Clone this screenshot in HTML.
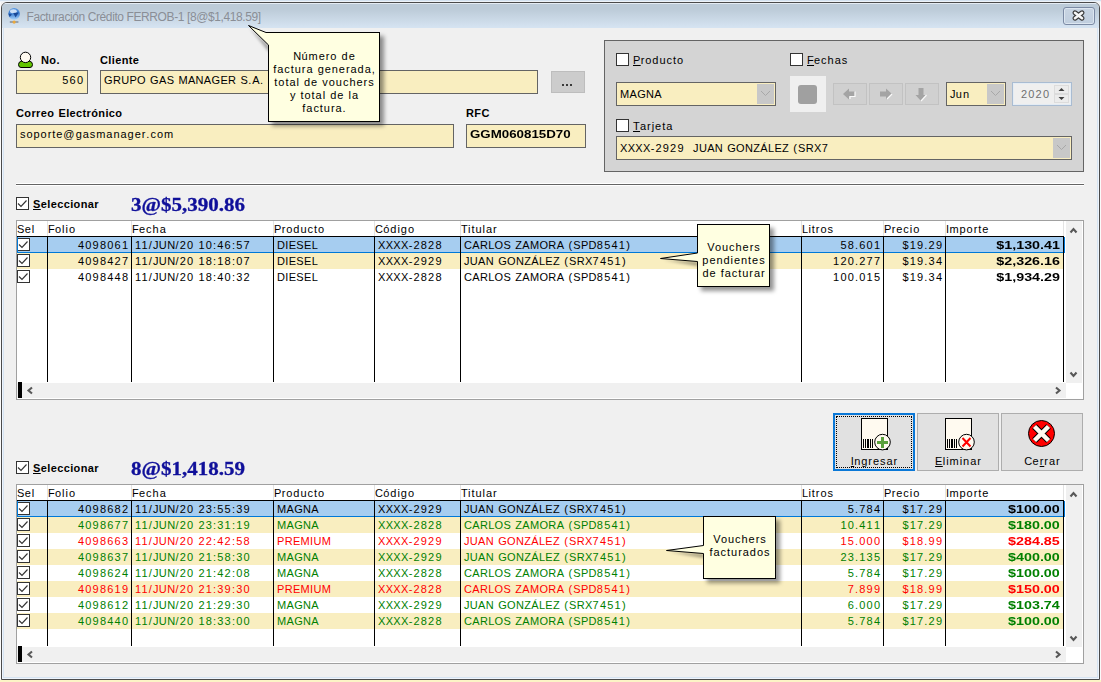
<!DOCTYPE html>
<html><head><meta charset="utf-8"><style>
html,body{margin:0;padding:0;}
body{width:1101px;height:682px;position:relative;overflow:hidden;background:#f0f0f0;font-family:"Liberation Sans", sans-serif;color:#000;}
.t{}
div{box-sizing:border-box;}
.u{text-decoration:underline;text-underline-offset:1px;}
</style></head><body>
<div style="position:absolute;left:0px;top:0px;width:1101px;height:1px;background:#d4e2f0"></div><div style="position:absolute;left:0px;top:1px;width:1101px;height:1px;background:#eef3f8"></div><div style="position:absolute;left:0px;top:2px;width:1px;height:680px;background:#fafafa"></div><div style="position:absolute;left:1100px;top:2px;width:1px;height:680px;background:#fafafa"></div><div style="position:absolute;left:0px;top:680px;width:1101px;height:2px;background:#fcf4c6"></div><div style="position:absolute;left:1px;top:2px;width:1099px;height:678px;border:1px solid #4a4a4a;border-radius:6px 6px 0 0;background:#eef4fc;"></div><div style="position:absolute;left:2px;top:3px;width:1097px;height:25px;border-radius:5px 5px 0 0;background:linear-gradient(#e4ecf4 0px,#e4ecf4 1px,#bccbd8 1px,#bccbd8 6px,#d6e4f2 25px);"></div><div style="position:absolute;left:3px;top:28px;width:1095px;height:650px;background:#d6e4f2"></div><div style="position:absolute;left:4px;top:28px;width:1093px;height:649px;background:#f0f0f0"></div><svg style="position:absolute;left:7px;top:7px" width="15" height="18" viewBox="0 0 15 18">
<defs><linearGradient id="gl" x1="0" y1="0" x2="0" y2="1"><stop offset="0" stop-color="#5a98e0"/><stop offset="0.45" stop-color="#3a7cd0"/><stop offset="1" stop-color="#a8d4fa"/></linearGradient></defs>
<circle cx="7.1" cy="6.9" r="5.8" fill="url(#gl)"/>
<ellipse cx="6.4" cy="4.2" rx="3.4" ry="2" fill="#eef6ff" opacity="0.8"/>
<path d="M1.4 6.4 L5 7.4 L2.6 10 Z" fill="#0f3d8c" opacity="0.85"/>
<path d="M6.2 6 L11.6 5.6 L8.6 10.4 Z" fill="#0f3d8c" opacity="0.85"/>
<rect x="2.8" y="14" width="8.6" height="2" fill="#8a929c" opacity="0.8"/>
<circle cx="7.1" cy="15.1" r="1.6" fill="#eca83a"/>
</svg><div class="t" style="position:absolute;left:26.5px;top:8.84px;line-height:16px;font-size:12px;white-space:nowrap;color:#8a8e96;letter-spacing:-0.4px;">Facturación Crédito FERROB-1 [8@$1,418.59]</div><div style="position:absolute;left:1063px;top:7px;width:32px;height:18px;border:1px solid #7b8aa4;border-radius:3px;background:linear-gradient(#c8d4e2,#c0cede);box-shadow:inset 0 0 0 1px #dce6f0;"></div><svg style="position:absolute;left:1071px;top:9px" width="15" height="13" viewBox="0 0 15 13">
<path d="M4 3.8 L11 9.2 M11 3.8 L4 9.2" stroke="#3a3a3a" stroke-width="5" stroke-linecap="round"/>
<path d="M4 3.8 L11 9.2 M11 3.8 L4 9.2" stroke="#f6f6f6" stroke-width="2.6" stroke-linecap="round"/>
</svg><svg style="position:absolute;left:17px;top:51px" width="17" height="18" viewBox="0 0 17 18">
<path d="M1.5 13.5 Q1.5 10.5 5 10 L12 10 Q15.5 10.5 15.5 13.5 Q15.5 16.5 13 16.5 L4 16.5 Q1.5 16.5 1.5 13.5 Z" fill="#62c400" stroke="#000" stroke-width="1"/>
<circle cx="8.5" cy="6.4" r="5.2" fill="#fffaf0" stroke="#000" stroke-width="1"/>
</svg><div class="t" style="position:absolute;left:41px;top:52.69px;line-height:15px;font-size:11px;white-space:nowrap;font-weight:bold;"><span style="letter-spacing:0.4px;">N</span><span style="letter-spacing:0.37px;">o</span>.</div><div class="t" style="position:absolute;left:100px;top:52.69px;line-height:15px;font-size:11px;white-space:nowrap;font-weight:bold;"><span style="letter-spacing:0.4px;">C</span><span style="letter-spacing:0.37px;">lient</span>e</div><div class="t" style="position:absolute;left:16px;top:105.69px;line-height:15px;font-size:11px;white-space:nowrap;font-weight:bold;"><span style="letter-spacing:0.4px;">C</span><span style="letter-spacing:0.37px;">orreo</span><span style="letter-spacing:1.0px;"> </span><span style="letter-spacing:0.4px;">E</span><span style="letter-spacing:0.37px;">lectrónic</span>o</div><div class="t" style="position:absolute;left:466px;top:105.69px;line-height:15px;font-size:11px;white-space:nowrap;font-weight:bold;"><span style="letter-spacing:0.4px;">RF</span>C</div><div style="position:absolute;left:16px;top:70px;width:72px;height:24px;background:#f9eec0;border:1px solid #646464;"></div><div class="t" style="position:absolute;right:1018px;top:72.69px;line-height:15px;font-size:11px;white-space:nowrap;"><span style="letter-spacing:1.2px;">56</span>0</div><div style="position:absolute;left:100px;top:70px;width:438px;height:24px;background:#f9eec0;border:1px solid #646464;"></div><div class="t" style="position:absolute;left:104px;top:72.69px;line-height:15px;font-size:11px;white-space:nowrap;"><span style="letter-spacing:0.32px;">GRUPO</span><span style="letter-spacing:1.1px;"> </span><span style="letter-spacing:0.32px;">GAS</span><span style="letter-spacing:1.1px;"> </span><span style="letter-spacing:0.32px;">MANAGER</span><span style="letter-spacing:1.1px;"> </span><span style="letter-spacing:0.32px;">S</span><span style="letter-spacing:1.15px;">.</span><span style="letter-spacing:0.32px;">A</span>.</div><div style="position:absolute;left:551px;top:71px;width:34px;height:22px;background:#cccccc;border:1px solid #bdbdbd;"></div><div style="position:absolute;left:562px;top:84px;width:2px;height:2px;background:#3a3a3a"></div><div style="position:absolute;left:566px;top:84px;width:2px;height:2px;background:#3a3a3a"></div><div style="position:absolute;left:570px;top:84px;width:2px;height:2px;background:#3a3a3a"></div><div style="position:absolute;left:16px;top:124px;width:438px;height:24px;background:#f9eec0;border:1px solid #646464;"></div><div class="t" style="position:absolute;left:20px;top:126.69px;line-height:15px;font-size:11px;white-space:nowrap;"><span style="letter-spacing:0.95px;">soporte</span><span style="letter-spacing:1.15px;">@</span><span style="letter-spacing:0.95px;">gasmanager</span><span style="letter-spacing:1.15px;">.</span><span style="letter-spacing:0.95px;">co</span>m</div><div style="position:absolute;left:466px;top:124px;width:120px;height:24px;background:#f9eec0;border:1px solid #646464;"></div><div class="t" style="position:absolute;left:470px;top:126.69px;line-height:15px;font-size:11px;white-space:nowrap;font-weight:bold;transform:scaleX(1.21);transform-origin:left center;">GGM060815D70</div><div style="position:absolute;left:604px;top:40px;width:480px;height:132px;background:#d4d4d4;border:1px solid #646464;"></div><div style="position:absolute;left:616px;top:53px;width:13px;height:13px;background:#fff;border:1px solid #333;"></div><div class="t" style="position:absolute;left:633px;top:52.69px;line-height:15px;font-size:11px;white-space:nowrap;"><span style="letter-spacing:0.32px;text-decoration:underline;">P</span><span style="letter-spacing:0.95px;">roduct</span>o</div><div style="position:absolute;left:790px;top:53px;width:13px;height:13px;background:#fff;border:1px solid #333;"></div><div class="t" style="position:absolute;left:807px;top:52.69px;line-height:15px;font-size:11px;white-space:nowrap;"><span style="letter-spacing:0.32px;text-decoration:underline;">F</span><span style="letter-spacing:0.95px;">echa</span>s</div><div style="position:absolute;left:616px;top:119px;width:13px;height:13px;background:#fff;border:1px solid #333;"></div><div class="t" style="position:absolute;left:633px;top:118.69px;line-height:15px;font-size:11px;white-space:nowrap;"><span style="letter-spacing:0.32px;text-decoration:underline;">T</span><span style="letter-spacing:0.95px;">arjet</span>a</div><div style="position:absolute;left:616px;top:82px;width:160px;height:24px;background:#f9eec0;border:1px solid #646464;"></div><div style="position:absolute;left:757px;top:84px;width:17px;height:20px;background:#c8c8c8;"></div><svg style="position:absolute;left:760px;top:90px" width="11" height="7" viewBox="0 0 11 7"><path d="M1 1 L5.5 5.5 L10 1" fill="none" stroke="#a8a8a8" stroke-width="1"/></svg><div class="t" style="position:absolute;left:620px;top:86.69px;line-height:15px;font-size:11px;white-space:nowrap;"><span style="letter-spacing:0.32px;">MAGN</span>A</div><div style="position:absolute;left:946px;top:82px;width:60px;height:24px;background:#f9eec0;border:1px solid #646464;"></div><div style="position:absolute;left:987px;top:84px;width:17px;height:20px;background:#c8c8c8;"></div><svg style="position:absolute;left:990px;top:90px" width="11" height="7" viewBox="0 0 11 7"><path d="M1 1 L5.5 5.5 L10 1" fill="none" stroke="#a8a8a8" stroke-width="1"/></svg><div class="t" style="position:absolute;left:950px;top:86.69px;line-height:15px;font-size:11px;white-space:nowrap;"><span style="letter-spacing:0.32px;">J</span><span style="letter-spacing:0.95px;">u</span>n</div><div style="position:absolute;left:616px;top:136px;width:456px;height:24px;background:#f9eec0;border:1px solid #646464;"></div><div style="position:absolute;left:1053px;top:138px;width:17px;height:20px;background:#c8c8c8;"></div><svg style="position:absolute;left:1056px;top:144px" width="11" height="7" viewBox="0 0 11 7"><path d="M1 1 L5.5 5.5 L10 1" fill="none" stroke="#a8a8a8" stroke-width="1"/></svg><div class="t" style="position:absolute;left:620px;top:140.69px;line-height:15px;font-size:11px;white-space:nowrap;"><span style="letter-spacing:0.32px;">XXXX</span><span style="letter-spacing:1.15px;">-</span><span style="letter-spacing:1.2px;">2929</span><span style="letter-spacing:1.1px;">&nbsp; </span><span style="letter-spacing:0.32px;">JUAN</span><span style="letter-spacing:1.1px;"> </span><span style="letter-spacing:0.32px;">GONZÁLEZ</span><span style="letter-spacing:1.1px;"> </span><span style="letter-spacing:1.15px;">(</span><span style="letter-spacing:0.32px;">SRX</span>7</div><div style="position:absolute;left:790px;top:76px;width:36px;height:36px;background:#efefef;"></div><div style="position:absolute;left:798px;top:85px;width:19px;height:19px;background:#a0a0a0;border-radius:3px;"></div><div style="position:absolute;left:833px;top:83px;width:34px;height:22px;background:#d0d0d0;border:1px solid #c2c2c2;"></div><div style="position:absolute;left:869px;top:83px;width:34px;height:22px;background:#d0d0d0;border:1px solid #c2c2c2;"></div><div style="position:absolute;left:905px;top:83px;width:34px;height:22px;background:#d0d0d0;border:1px solid #c2c2c2;"></div><svg style="position:absolute;left:842px;top:85.5px" width="16" height="16" viewBox="0 0 16 16">
<path d="M1 8 L7 2.5 L7 5.5 L13 5.5 L13 10.5 L7 10.5 L7 13.5 Z" fill="#a4a4a4"/>
<path d="M13 5.5 L13 10.5 L8 10.5 L8 13" fill="none" stroke="#fafafa" stroke-width="1.2"/>
</svg><svg style="position:absolute;left:877px;top:85.5px" width="16" height="16" viewBox="0 0 16 16">
<path d="M15 8 L9 2.5 L9 5.5 L3 5.5 L3 10.5 L9 10.5 L9 13.5 Z" fill="#a4a4a4"/>
<path d="M15 8 L10 13" fill="none" stroke="#fafafa" stroke-width="1.2"/>
</svg><svg style="position:absolute;left:913px;top:86px" width="16" height="16" viewBox="0 0 16 16">
<path d="M8 15 L2.5 9 L5.5 9 L5.5 2 L10.5 2 L10.5 9 L13.5 9 Z" fill="#a4a4a4"/>
<path d="M13.5 9 L8 15" fill="none" stroke="#fafafa" stroke-width="1.2"/>
</svg><div style="position:absolute;left:1012px;top:82px;width:60px;height:24px;background:#efefef;border:1px solid #a9bcd2;box-shadow:inset 0 0 0 1px #e4ecf4;"></div><div class="t" style="position:absolute;right:52px;top:86.69px;line-height:15px;font-size:11px;white-space:nowrap;color:#707070;"><span style="letter-spacing:1.2px;">202</span>0</div><div style="position:absolute;left:1054px;top:85px;width:15px;height:9px;background:#ececec;border:1px solid #dcdcdc;"></div><div style="position:absolute;left:1054px;top:94px;width:15px;height:9px;background:#ececec;border:1px solid #dcdcdc;"></div><svg style="position:absolute;left:1057px;top:86px" width="9" height="16" viewBox="0 0 9 16"><path d="M1.5 5 L4.5 2 L7.5 5 Z" fill="#404040"/><path d="M1.5 11 L7.5 11 L4.5 14 Z" fill="#404040"/></svg><div style="position:absolute;left:16px;top:183px;width:1068px;height:1px;background:#fff"></div><div style="position:absolute;left:16px;top:184px;width:1068px;height:1px;background:#646464"></div><div style="position:absolute;left:16px;top:185px;width:1068px;height:1px;background:#fff"></div><div style="position:absolute;left:16px;top:197px;width:13px;height:13px;background:#fff;border:1px solid #333;"></div><svg style="position:absolute;left:16px;top:197px" width="13" height="13" viewBox="0 0 13 13"><path d="M2 6.5 L5 9.5 L10.5 3.5" fill="none" stroke="#333" stroke-width="1.15"/></svg><div class="t" style="position:absolute;left:33px;top:196.69px;line-height:15px;font-size:11px;white-space:nowrap;font-weight:bold;"><span style="letter-spacing:0.4px;text-decoration:underline;">S</span><span style="letter-spacing:0.37px;">elecciona</span>r</div><div class="t" style="position:absolute;left:131px;top:193.76px;line-height:22px;font-size:18px;white-space:nowrap;font-family:'Liberation Serif',serif;font-weight:bold;color:#10109a;-webkit-text-stroke:0.3px #10109a;transform:scaleX(1.165);transform-origin:left center;">3@$5,390.86</div><div style="position:absolute;left:16px;top:220px;width:1068px;height:180px;background:#fff;border:1px solid #a0a0a0;"></div><div class="t" style="position:absolute;left:17px;top:221.69px;line-height:15px;font-size:11px;white-space:nowrap;"><span style="letter-spacing:0.32px;">S</span><span style="letter-spacing:0.95px;">e</span>l</div><div class="t" style="position:absolute;left:48px;top:221.69px;line-height:15px;font-size:11px;white-space:nowrap;"><span style="letter-spacing:0.32px;">F</span><span style="letter-spacing:0.95px;">oli</span>o</div><div class="t" style="position:absolute;left:132px;top:221.69px;line-height:15px;font-size:11px;white-space:nowrap;"><span style="letter-spacing:0.32px;">F</span><span style="letter-spacing:0.95px;">ech</span>a</div><div class="t" style="position:absolute;left:274px;top:221.69px;line-height:15px;font-size:11px;white-space:nowrap;"><span style="letter-spacing:0.32px;">P</span><span style="letter-spacing:0.95px;">roduct</span>o</div><div class="t" style="position:absolute;left:375px;top:221.69px;line-height:15px;font-size:11px;white-space:nowrap;"><span style="letter-spacing:0.32px;">C</span><span style="letter-spacing:0.95px;">ódig</span>o</div><div class="t" style="position:absolute;left:461px;top:221.69px;line-height:15px;font-size:11px;white-space:nowrap;"><span style="letter-spacing:0.32px;">T</span><span style="letter-spacing:0.95px;">itula</span>r</div><div class="t" style="position:absolute;left:802px;top:221.69px;line-height:15px;font-size:11px;white-space:nowrap;"><span style="letter-spacing:0.32px;">L</span><span style="letter-spacing:0.95px;">itro</span>s</div><div class="t" style="position:absolute;left:884px;top:221.69px;line-height:15px;font-size:11px;white-space:nowrap;"><span style="letter-spacing:0.32px;">P</span><span style="letter-spacing:0.95px;">reci</span>o</div><div class="t" style="position:absolute;left:946px;top:221.69px;line-height:15px;font-size:11px;white-space:nowrap;"><span style="letter-spacing:0.32px;">I</span><span style="letter-spacing:0.95px;">mport</span>e</div><div style="position:absolute;left:47px;top:221px;width:1px;height:15px;background:#e3e3e3"></div><div style="position:absolute;left:131px;top:221px;width:1px;height:15px;background:#e3e3e3"></div><div style="position:absolute;left:273px;top:221px;width:1px;height:15px;background:#e3e3e3"></div><div style="position:absolute;left:374px;top:221px;width:1px;height:15px;background:#e3e3e3"></div><div style="position:absolute;left:460px;top:221px;width:1px;height:15px;background:#e3e3e3"></div><div style="position:absolute;left:801px;top:221px;width:1px;height:15px;background:#e3e3e3"></div><div style="position:absolute;left:883px;top:221px;width:1px;height:15px;background:#e3e3e3"></div><div style="position:absolute;left:945px;top:221px;width:1px;height:15px;background:#e3e3e3"></div><div style="position:absolute;left:1063px;top:221px;width:1px;height:15px;background:#e3e3e3"></div><div style="position:absolute;left:17px;top:236px;width:1047px;height:1px;background:#000"></div><div style="position:absolute;left:17px;top:237px;width:1047px;height:16px;background:#a6cdf0"></div><div style="position:absolute;left:17px;top:238px;width:13px;height:13px;background:#fff;border:1px solid #333;"></div><svg style="position:absolute;left:17px;top:238px" width="13" height="13" viewBox="0 0 13 13"><path d="M2 6.5 L5 9.5 L10.5 3.5" fill="none" stroke="#333" stroke-width="1.15"/></svg><div class="t" style="position:absolute;right:973px;top:237.69px;line-height:15px;font-size:11px;white-space:nowrap;color:#000;"><span style="letter-spacing:1.2px;">409806</span>1</div><div class="t" style="position:absolute;left:135px;top:237.69px;line-height:15px;font-size:11px;white-space:nowrap;color:#000;"><span style="letter-spacing:1.2px;">11</span><span style="letter-spacing:1.15px;">/</span><span style="letter-spacing:0.32px;">JUN</span><span style="letter-spacing:1.15px;">/</span><span style="letter-spacing:1.2px;">20</span><span style="letter-spacing:1.1px;"> </span><span style="letter-spacing:1.2px;">10</span><span style="letter-spacing:1.15px;">:</span><span style="letter-spacing:1.2px;">46</span><span style="letter-spacing:1.15px;">:</span><span style="letter-spacing:1.2px;">5</span>7</div><div class="t" style="position:absolute;left:277px;top:237.69px;line-height:15px;font-size:11px;white-space:nowrap;color:#000;"><span style="letter-spacing:0.32px;">DIESE</span>L</div><div class="t" style="position:absolute;left:378px;top:237.69px;line-height:15px;font-size:11px;white-space:nowrap;color:#000;"><span style="letter-spacing:0.32px;">XXXX</span><span style="letter-spacing:1.15px;">-</span><span style="letter-spacing:1.2px;">282</span>8</div><div class="t" style="position:absolute;left:464px;top:237.69px;line-height:15px;font-size:11px;white-space:nowrap;color:#000;"><span style="letter-spacing:0.32px;">CARLOS</span><span style="letter-spacing:1.1px;"> </span><span style="letter-spacing:0.32px;">ZAMORA</span><span style="letter-spacing:1.1px;"> </span><span style="letter-spacing:1.15px;">(</span><span style="letter-spacing:0.32px;">SPD</span><span style="letter-spacing:1.2px;">8541</span>)</div><div class="t" style="position:absolute;right:221px;top:237.69px;line-height:15px;font-size:11px;white-space:nowrap;color:#000;"><span style="letter-spacing:1.2px;">58</span><span style="letter-spacing:1.15px;">.</span><span style="letter-spacing:1.2px;">60</span>1</div><div class="t" style="position:absolute;right:159px;top:237.69px;line-height:15px;font-size:11px;white-space:nowrap;color:#000;"><span style="letter-spacing:1.15px;">$</span><span style="letter-spacing:1.2px;">19</span><span style="letter-spacing:1.15px;">.</span><span style="letter-spacing:1.2px;">2</span>9</div><div class="t" style="position:absolute;right:41.5px;top:237.69px;line-height:15px;font-size:11px;white-space:nowrap;font-weight:bold;color:#000;transform:scaleX(1.3);transform-origin:right center;">$1,130.41</div><div style="position:absolute;left:17px;top:237px;width:1px;height:16px;background:#0078d7"></div><div style="position:absolute;left:17px;top:252px;width:1048px;height:1px;background:#0078d7"></div><div style="position:absolute;left:1064px;top:237px;width:1px;height:16px;background:#0078d7"></div><div style="position:absolute;left:17px;top:253px;width:1047px;height:16px;background:#f9eec0"></div><div style="position:absolute;left:17px;top:254px;width:13px;height:13px;background:#fff;border:1px solid #333;"></div><svg style="position:absolute;left:17px;top:254px" width="13" height="13" viewBox="0 0 13 13"><path d="M2 6.5 L5 9.5 L10.5 3.5" fill="none" stroke="#333" stroke-width="1.15"/></svg><div class="t" style="position:absolute;right:973px;top:253.69px;line-height:15px;font-size:11px;white-space:nowrap;color:#000;"><span style="letter-spacing:1.2px;">409842</span>7</div><div class="t" style="position:absolute;left:135px;top:253.69px;line-height:15px;font-size:11px;white-space:nowrap;color:#000;"><span style="letter-spacing:1.2px;">11</span><span style="letter-spacing:1.15px;">/</span><span style="letter-spacing:0.32px;">JUN</span><span style="letter-spacing:1.15px;">/</span><span style="letter-spacing:1.2px;">20</span><span style="letter-spacing:1.1px;"> </span><span style="letter-spacing:1.2px;">18</span><span style="letter-spacing:1.15px;">:</span><span style="letter-spacing:1.2px;">18</span><span style="letter-spacing:1.15px;">:</span><span style="letter-spacing:1.2px;">0</span>7</div><div class="t" style="position:absolute;left:277px;top:253.69px;line-height:15px;font-size:11px;white-space:nowrap;color:#000;"><span style="letter-spacing:0.32px;">DIESE</span>L</div><div class="t" style="position:absolute;left:378px;top:253.69px;line-height:15px;font-size:11px;white-space:nowrap;color:#000;"><span style="letter-spacing:0.32px;">XXXX</span><span style="letter-spacing:1.15px;">-</span><span style="letter-spacing:1.2px;">292</span>9</div><div class="t" style="position:absolute;left:464px;top:253.69px;line-height:15px;font-size:11px;white-space:nowrap;color:#000;"><span style="letter-spacing:0.32px;">JUAN</span><span style="letter-spacing:1.1px;"> </span><span style="letter-spacing:0.32px;">GONZÁLEZ</span><span style="letter-spacing:1.1px;"> </span><span style="letter-spacing:1.15px;">(</span><span style="letter-spacing:0.32px;">SRX</span><span style="letter-spacing:1.2px;">7451</span>)</div><div class="t" style="position:absolute;right:221px;top:253.69px;line-height:15px;font-size:11px;white-space:nowrap;color:#000;"><span style="letter-spacing:1.2px;">120</span><span style="letter-spacing:1.15px;">.</span><span style="letter-spacing:1.2px;">27</span>7</div><div class="t" style="position:absolute;right:159px;top:253.69px;line-height:15px;font-size:11px;white-space:nowrap;color:#000;"><span style="letter-spacing:1.15px;">$</span><span style="letter-spacing:1.2px;">19</span><span style="letter-spacing:1.15px;">.</span><span style="letter-spacing:1.2px;">3</span>4</div><div class="t" style="position:absolute;right:41.5px;top:253.69px;line-height:15px;font-size:11px;white-space:nowrap;font-weight:bold;color:#000;transform:scaleX(1.3);transform-origin:right center;">$2,326.16</div><div style="position:absolute;left:17px;top:269px;width:1047px;height:16px;background:#fff"></div><div style="position:absolute;left:17px;top:270px;width:13px;height:13px;background:#fff;border:1px solid #333;"></div><svg style="position:absolute;left:17px;top:270px" width="13" height="13" viewBox="0 0 13 13"><path d="M2 6.5 L5 9.5 L10.5 3.5" fill="none" stroke="#333" stroke-width="1.15"/></svg><div class="t" style="position:absolute;right:973px;top:269.69px;line-height:15px;font-size:11px;white-space:nowrap;color:#000;"><span style="letter-spacing:1.2px;">409844</span>8</div><div class="t" style="position:absolute;left:135px;top:269.69px;line-height:15px;font-size:11px;white-space:nowrap;color:#000;"><span style="letter-spacing:1.2px;">11</span><span style="letter-spacing:1.15px;">/</span><span style="letter-spacing:0.32px;">JUN</span><span style="letter-spacing:1.15px;">/</span><span style="letter-spacing:1.2px;">20</span><span style="letter-spacing:1.1px;"> </span><span style="letter-spacing:1.2px;">18</span><span style="letter-spacing:1.15px;">:</span><span style="letter-spacing:1.2px;">40</span><span style="letter-spacing:1.15px;">:</span><span style="letter-spacing:1.2px;">3</span>2</div><div class="t" style="position:absolute;left:277px;top:269.69px;line-height:15px;font-size:11px;white-space:nowrap;color:#000;"><span style="letter-spacing:0.32px;">DIESE</span>L</div><div class="t" style="position:absolute;left:378px;top:269.69px;line-height:15px;font-size:11px;white-space:nowrap;color:#000;"><span style="letter-spacing:0.32px;">XXXX</span><span style="letter-spacing:1.15px;">-</span><span style="letter-spacing:1.2px;">282</span>8</div><div class="t" style="position:absolute;left:464px;top:269.69px;line-height:15px;font-size:11px;white-space:nowrap;color:#000;"><span style="letter-spacing:0.32px;">CARLOS</span><span style="letter-spacing:1.1px;"> </span><span style="letter-spacing:0.32px;">ZAMORA</span><span style="letter-spacing:1.1px;"> </span><span style="letter-spacing:1.15px;">(</span><span style="letter-spacing:0.32px;">SPD</span><span style="letter-spacing:1.2px;">8541</span>)</div><div class="t" style="position:absolute;right:221px;top:269.69px;line-height:15px;font-size:11px;white-space:nowrap;color:#000;"><span style="letter-spacing:1.2px;">100</span><span style="letter-spacing:1.15px;">.</span><span style="letter-spacing:1.2px;">01</span>5</div><div class="t" style="position:absolute;right:159px;top:269.69px;line-height:15px;font-size:11px;white-space:nowrap;color:#000;"><span style="letter-spacing:1.15px;">$</span><span style="letter-spacing:1.2px;">19</span><span style="letter-spacing:1.15px;">.</span><span style="letter-spacing:1.2px;">3</span>4</div><div class="t" style="position:absolute;right:41.5px;top:269.69px;line-height:15px;font-size:11px;white-space:nowrap;font-weight:bold;color:#000;transform:scaleX(1.3);transform-origin:right center;">$1,934.29</div><div style="position:absolute;left:47px;top:236px;width:1px;height:146px;background:#000"></div><div style="position:absolute;left:131px;top:236px;width:1px;height:146px;background:#000"></div><div style="position:absolute;left:273px;top:236px;width:1px;height:146px;background:#000"></div><div style="position:absolute;left:374px;top:236px;width:1px;height:146px;background:#000"></div><div style="position:absolute;left:460px;top:236px;width:1px;height:146px;background:#000"></div><div style="position:absolute;left:801px;top:236px;width:1px;height:146px;background:#000"></div><div style="position:absolute;left:883px;top:236px;width:1px;height:146px;background:#000"></div><div style="position:absolute;left:945px;top:236px;width:1px;height:146px;background:#000"></div><div style="position:absolute;left:1063px;top:236px;width:1px;height:146px;background:#000"></div><div style="position:absolute;left:17px;top:383px;width:1049px;height:15px;background:#f0f0f0"></div><div style="position:absolute;left:18px;top:382px;width:4px;height:16px;background:#000"></div><svg style="position:absolute;left:25px;top:386px" width="10" height="9" viewBox="0 0 10 9"><path d="M7 1.5 L3.5 4.5 L7 7.5" fill="none" stroke="#585858" stroke-width="2.1"/></svg><svg style="position:absolute;left:1053px;top:386px" width="10" height="9" viewBox="0 0 10 9"><path d="M3 1.5 L6.5 4.5 L3 7.5" fill="none" stroke="#585858" stroke-width="2.1"/></svg><div style="position:absolute;left:1066px;top:221px;width:16px;height:162px;background:#f0f0f0"></div><svg style="position:absolute;left:1069px;top:226px" width="10" height="9" viewBox="0 0 10 9"><path d="M1.5 6.5 L4.5 3 L7.5 6.5" fill="none" stroke="#585858" stroke-width="2.1"/></svg><svg style="position:absolute;left:1069px;top:370px" width="10" height="9" viewBox="0 0 10 9"><path d="M1.5 2.5 L4.5 6 L7.5 2.5" fill="none" stroke="#585858" stroke-width="2.1"/></svg><div style="position:absolute;left:16px;top:461px;width:13px;height:13px;background:#fff;border:1px solid #333;"></div><svg style="position:absolute;left:16px;top:461px" width="13" height="13" viewBox="0 0 13 13"><path d="M2 6.5 L5 9.5 L10.5 3.5" fill="none" stroke="#333" stroke-width="1.15"/></svg><div class="t" style="position:absolute;left:33px;top:460.69px;line-height:15px;font-size:11px;white-space:nowrap;font-weight:bold;"><span style="letter-spacing:0.4px;text-decoration:underline;">S</span><span style="letter-spacing:0.37px;">elecciona</span>r</div><div class="t" style="position:absolute;left:131px;top:457.76px;line-height:22px;font-size:18px;white-space:nowrap;font-family:'Liberation Serif',serif;font-weight:bold;color:#10109a;-webkit-text-stroke:0.3px #10109a;transform:scaleX(1.165);transform-origin:left center;">8@$1,418.59</div><div style="position:absolute;left:16px;top:484px;width:1068px;height:180px;background:#fff;border:1px solid #a0a0a0;"></div><div class="t" style="position:absolute;left:17px;top:485.69px;line-height:15px;font-size:11px;white-space:nowrap;"><span style="letter-spacing:0.32px;">S</span><span style="letter-spacing:0.95px;">e</span>l</div><div class="t" style="position:absolute;left:48px;top:485.69px;line-height:15px;font-size:11px;white-space:nowrap;"><span style="letter-spacing:0.32px;">F</span><span style="letter-spacing:0.95px;">oli</span>o</div><div class="t" style="position:absolute;left:132px;top:485.69px;line-height:15px;font-size:11px;white-space:nowrap;"><span style="letter-spacing:0.32px;">F</span><span style="letter-spacing:0.95px;">ech</span>a</div><div class="t" style="position:absolute;left:274px;top:485.69px;line-height:15px;font-size:11px;white-space:nowrap;"><span style="letter-spacing:0.32px;">P</span><span style="letter-spacing:0.95px;">roduct</span>o</div><div class="t" style="position:absolute;left:375px;top:485.69px;line-height:15px;font-size:11px;white-space:nowrap;"><span style="letter-spacing:0.32px;">C</span><span style="letter-spacing:0.95px;">ódig</span>o</div><div class="t" style="position:absolute;left:461px;top:485.69px;line-height:15px;font-size:11px;white-space:nowrap;"><span style="letter-spacing:0.32px;">T</span><span style="letter-spacing:0.95px;">itula</span>r</div><div class="t" style="position:absolute;left:802px;top:485.69px;line-height:15px;font-size:11px;white-space:nowrap;"><span style="letter-spacing:0.32px;">L</span><span style="letter-spacing:0.95px;">itro</span>s</div><div class="t" style="position:absolute;left:884px;top:485.69px;line-height:15px;font-size:11px;white-space:nowrap;"><span style="letter-spacing:0.32px;">P</span><span style="letter-spacing:0.95px;">reci</span>o</div><div class="t" style="position:absolute;left:946px;top:485.69px;line-height:15px;font-size:11px;white-space:nowrap;"><span style="letter-spacing:0.32px;">I</span><span style="letter-spacing:0.95px;">mport</span>e</div><div style="position:absolute;left:47px;top:485px;width:1px;height:15px;background:#e3e3e3"></div><div style="position:absolute;left:131px;top:485px;width:1px;height:15px;background:#e3e3e3"></div><div style="position:absolute;left:273px;top:485px;width:1px;height:15px;background:#e3e3e3"></div><div style="position:absolute;left:374px;top:485px;width:1px;height:15px;background:#e3e3e3"></div><div style="position:absolute;left:460px;top:485px;width:1px;height:15px;background:#e3e3e3"></div><div style="position:absolute;left:801px;top:485px;width:1px;height:15px;background:#e3e3e3"></div><div style="position:absolute;left:883px;top:485px;width:1px;height:15px;background:#e3e3e3"></div><div style="position:absolute;left:945px;top:485px;width:1px;height:15px;background:#e3e3e3"></div><div style="position:absolute;left:1063px;top:485px;width:1px;height:15px;background:#e3e3e3"></div><div style="position:absolute;left:17px;top:500px;width:1047px;height:1px;background:#000"></div><div style="position:absolute;left:17px;top:501px;width:1047px;height:16px;background:#a6cdf0"></div><div style="position:absolute;left:17px;top:502px;width:13px;height:13px;background:#fff;border:1px solid #333;"></div><svg style="position:absolute;left:17px;top:502px" width="13" height="13" viewBox="0 0 13 13"><path d="M2 6.5 L5 9.5 L10.5 3.5" fill="none" stroke="#333" stroke-width="1.15"/></svg><div class="t" style="position:absolute;right:973px;top:501.69px;line-height:15px;font-size:11px;white-space:nowrap;color:#000;"><span style="letter-spacing:1.2px;">409868</span>2</div><div class="t" style="position:absolute;left:135px;top:501.69px;line-height:15px;font-size:11px;white-space:nowrap;color:#000;"><span style="letter-spacing:1.2px;">11</span><span style="letter-spacing:1.15px;">/</span><span style="letter-spacing:0.32px;">JUN</span><span style="letter-spacing:1.15px;">/</span><span style="letter-spacing:1.2px;">20</span><span style="letter-spacing:1.1px;"> </span><span style="letter-spacing:1.2px;">23</span><span style="letter-spacing:1.15px;">:</span><span style="letter-spacing:1.2px;">55</span><span style="letter-spacing:1.15px;">:</span><span style="letter-spacing:1.2px;">3</span>9</div><div class="t" style="position:absolute;left:277px;top:501.69px;line-height:15px;font-size:11px;white-space:nowrap;color:#000;"><span style="letter-spacing:0.32px;">MAGN</span>A</div><div class="t" style="position:absolute;left:378px;top:501.69px;line-height:15px;font-size:11px;white-space:nowrap;color:#000;"><span style="letter-spacing:0.32px;">XXXX</span><span style="letter-spacing:1.15px;">-</span><span style="letter-spacing:1.2px;">292</span>9</div><div class="t" style="position:absolute;left:464px;top:501.69px;line-height:15px;font-size:11px;white-space:nowrap;color:#000;"><span style="letter-spacing:0.32px;">JUAN</span><span style="letter-spacing:1.1px;"> </span><span style="letter-spacing:0.32px;">GONZÁLEZ</span><span style="letter-spacing:1.1px;"> </span><span style="letter-spacing:1.15px;">(</span><span style="letter-spacing:0.32px;">SRX</span><span style="letter-spacing:1.2px;">7451</span>)</div><div class="t" style="position:absolute;right:221px;top:501.69px;line-height:15px;font-size:11px;white-space:nowrap;color:#000;"><span style="letter-spacing:1.2px;">5</span><span style="letter-spacing:1.15px;">.</span><span style="letter-spacing:1.2px;">78</span>4</div><div class="t" style="position:absolute;right:159px;top:501.69px;line-height:15px;font-size:11px;white-space:nowrap;color:#000;"><span style="letter-spacing:1.15px;">$</span><span style="letter-spacing:1.2px;">17</span><span style="letter-spacing:1.15px;">.</span><span style="letter-spacing:1.2px;">2</span>9</div><div class="t" style="position:absolute;right:41.5px;top:501.69px;line-height:15px;font-size:11px;white-space:nowrap;font-weight:bold;color:#000;transform:scaleX(1.3);transform-origin:right center;">$100.00</div><div style="position:absolute;left:17px;top:501px;width:1px;height:16px;background:#0078d7"></div><div style="position:absolute;left:17px;top:516px;width:1048px;height:1px;background:#0078d7"></div><div style="position:absolute;left:1064px;top:501px;width:1px;height:16px;background:#0078d7"></div><div style="position:absolute;left:17px;top:517px;width:1047px;height:16px;background:#f9eec0"></div><div style="position:absolute;left:17px;top:518px;width:13px;height:13px;background:#fff;border:1px solid #333;"></div><svg style="position:absolute;left:17px;top:518px" width="13" height="13" viewBox="0 0 13 13"><path d="M2 6.5 L5 9.5 L10.5 3.5" fill="none" stroke="#333" stroke-width="1.15"/></svg><div class="t" style="position:absolute;right:973px;top:517.69px;line-height:15px;font-size:11px;white-space:nowrap;color:#008000;"><span style="letter-spacing:1.2px;">409867</span>7</div><div class="t" style="position:absolute;left:135px;top:517.69px;line-height:15px;font-size:11px;white-space:nowrap;color:#008000;"><span style="letter-spacing:1.2px;">11</span><span style="letter-spacing:1.15px;">/</span><span style="letter-spacing:0.32px;">JUN</span><span style="letter-spacing:1.15px;">/</span><span style="letter-spacing:1.2px;">20</span><span style="letter-spacing:1.1px;"> </span><span style="letter-spacing:1.2px;">23</span><span style="letter-spacing:1.15px;">:</span><span style="letter-spacing:1.2px;">31</span><span style="letter-spacing:1.15px;">:</span><span style="letter-spacing:1.2px;">1</span>9</div><div class="t" style="position:absolute;left:277px;top:517.69px;line-height:15px;font-size:11px;white-space:nowrap;color:#008000;"><span style="letter-spacing:0.32px;">MAGN</span>A</div><div class="t" style="position:absolute;left:378px;top:517.69px;line-height:15px;font-size:11px;white-space:nowrap;color:#008000;"><span style="letter-spacing:0.32px;">XXXX</span><span style="letter-spacing:1.15px;">-</span><span style="letter-spacing:1.2px;">282</span>8</div><div class="t" style="position:absolute;left:464px;top:517.69px;line-height:15px;font-size:11px;white-space:nowrap;color:#008000;"><span style="letter-spacing:0.32px;">CARLOS</span><span style="letter-spacing:1.1px;"> </span><span style="letter-spacing:0.32px;">ZAMORA</span><span style="letter-spacing:1.1px;"> </span><span style="letter-spacing:1.15px;">(</span><span style="letter-spacing:0.32px;">SPD</span><span style="letter-spacing:1.2px;">8541</span>)</div><div class="t" style="position:absolute;right:221px;top:517.69px;line-height:15px;font-size:11px;white-space:nowrap;color:#008000;"><span style="letter-spacing:1.2px;">10</span><span style="letter-spacing:1.15px;">.</span><span style="letter-spacing:1.2px;">41</span>1</div><div class="t" style="position:absolute;right:159px;top:517.69px;line-height:15px;font-size:11px;white-space:nowrap;color:#008000;"><span style="letter-spacing:1.15px;">$</span><span style="letter-spacing:1.2px;">17</span><span style="letter-spacing:1.15px;">.</span><span style="letter-spacing:1.2px;">2</span>9</div><div class="t" style="position:absolute;right:41.5px;top:517.69px;line-height:15px;font-size:11px;white-space:nowrap;font-weight:bold;color:#008000;transform:scaleX(1.3);transform-origin:right center;">$180.00</div><div style="position:absolute;left:17px;top:533px;width:1047px;height:16px;background:#fff"></div><div style="position:absolute;left:17px;top:534px;width:13px;height:13px;background:#fff;border:1px solid #333;"></div><svg style="position:absolute;left:17px;top:534px" width="13" height="13" viewBox="0 0 13 13"><path d="M2 6.5 L5 9.5 L10.5 3.5" fill="none" stroke="#333" stroke-width="1.15"/></svg><div class="t" style="position:absolute;right:973px;top:533.69px;line-height:15px;font-size:11px;white-space:nowrap;color:#ff0000;"><span style="letter-spacing:1.2px;">409866</span>3</div><div class="t" style="position:absolute;left:135px;top:533.69px;line-height:15px;font-size:11px;white-space:nowrap;color:#ff0000;"><span style="letter-spacing:1.2px;">11</span><span style="letter-spacing:1.15px;">/</span><span style="letter-spacing:0.32px;">JUN</span><span style="letter-spacing:1.15px;">/</span><span style="letter-spacing:1.2px;">20</span><span style="letter-spacing:1.1px;"> </span><span style="letter-spacing:1.2px;">22</span><span style="letter-spacing:1.15px;">:</span><span style="letter-spacing:1.2px;">42</span><span style="letter-spacing:1.15px;">:</span><span style="letter-spacing:1.2px;">5</span>8</div><div class="t" style="position:absolute;left:277px;top:533.69px;line-height:15px;font-size:11px;white-space:nowrap;color:#ff0000;"><span style="letter-spacing:0.32px;">PREMIU</span>M</div><div class="t" style="position:absolute;left:378px;top:533.69px;line-height:15px;font-size:11px;white-space:nowrap;color:#ff0000;"><span style="letter-spacing:0.32px;">XXXX</span><span style="letter-spacing:1.15px;">-</span><span style="letter-spacing:1.2px;">292</span>9</div><div class="t" style="position:absolute;left:464px;top:533.69px;line-height:15px;font-size:11px;white-space:nowrap;color:#ff0000;"><span style="letter-spacing:0.32px;">JUAN</span><span style="letter-spacing:1.1px;"> </span><span style="letter-spacing:0.32px;">GONZÁLEZ</span><span style="letter-spacing:1.1px;"> </span><span style="letter-spacing:1.15px;">(</span><span style="letter-spacing:0.32px;">SRX</span><span style="letter-spacing:1.2px;">7451</span>)</div><div class="t" style="position:absolute;right:221px;top:533.69px;line-height:15px;font-size:11px;white-space:nowrap;color:#ff0000;"><span style="letter-spacing:1.2px;">15</span><span style="letter-spacing:1.15px;">.</span><span style="letter-spacing:1.2px;">00</span>0</div><div class="t" style="position:absolute;right:159px;top:533.69px;line-height:15px;font-size:11px;white-space:nowrap;color:#ff0000;"><span style="letter-spacing:1.15px;">$</span><span style="letter-spacing:1.2px;">18</span><span style="letter-spacing:1.15px;">.</span><span style="letter-spacing:1.2px;">9</span>9</div><div class="t" style="position:absolute;right:41.5px;top:533.69px;line-height:15px;font-size:11px;white-space:nowrap;font-weight:bold;color:#ff0000;transform:scaleX(1.3);transform-origin:right center;">$284.85</div><div style="position:absolute;left:17px;top:549px;width:1047px;height:16px;background:#f9eec0"></div><div style="position:absolute;left:17px;top:550px;width:13px;height:13px;background:#fff;border:1px solid #333;"></div><svg style="position:absolute;left:17px;top:550px" width="13" height="13" viewBox="0 0 13 13"><path d="M2 6.5 L5 9.5 L10.5 3.5" fill="none" stroke="#333" stroke-width="1.15"/></svg><div class="t" style="position:absolute;right:973px;top:549.69px;line-height:15px;font-size:11px;white-space:nowrap;color:#008000;"><span style="letter-spacing:1.2px;">409863</span>7</div><div class="t" style="position:absolute;left:135px;top:549.69px;line-height:15px;font-size:11px;white-space:nowrap;color:#008000;"><span style="letter-spacing:1.2px;">11</span><span style="letter-spacing:1.15px;">/</span><span style="letter-spacing:0.32px;">JUN</span><span style="letter-spacing:1.15px;">/</span><span style="letter-spacing:1.2px;">20</span><span style="letter-spacing:1.1px;"> </span><span style="letter-spacing:1.2px;">21</span><span style="letter-spacing:1.15px;">:</span><span style="letter-spacing:1.2px;">58</span><span style="letter-spacing:1.15px;">:</span><span style="letter-spacing:1.2px;">3</span>0</div><div class="t" style="position:absolute;left:277px;top:549.69px;line-height:15px;font-size:11px;white-space:nowrap;color:#008000;"><span style="letter-spacing:0.32px;">MAGN</span>A</div><div class="t" style="position:absolute;left:378px;top:549.69px;line-height:15px;font-size:11px;white-space:nowrap;color:#008000;"><span style="letter-spacing:0.32px;">XXXX</span><span style="letter-spacing:1.15px;">-</span><span style="letter-spacing:1.2px;">292</span>9</div><div class="t" style="position:absolute;left:464px;top:549.69px;line-height:15px;font-size:11px;white-space:nowrap;color:#008000;"><span style="letter-spacing:0.32px;">JUAN</span><span style="letter-spacing:1.1px;"> </span><span style="letter-spacing:0.32px;">GONZÁLEZ</span><span style="letter-spacing:1.1px;"> </span><span style="letter-spacing:1.15px;">(</span><span style="letter-spacing:0.32px;">SRX</span><span style="letter-spacing:1.2px;">7451</span>)</div><div class="t" style="position:absolute;right:221px;top:549.69px;line-height:15px;font-size:11px;white-space:nowrap;color:#008000;"><span style="letter-spacing:1.2px;">23</span><span style="letter-spacing:1.15px;">.</span><span style="letter-spacing:1.2px;">13</span>5</div><div class="t" style="position:absolute;right:159px;top:549.69px;line-height:15px;font-size:11px;white-space:nowrap;color:#008000;"><span style="letter-spacing:1.15px;">$</span><span style="letter-spacing:1.2px;">17</span><span style="letter-spacing:1.15px;">.</span><span style="letter-spacing:1.2px;">2</span>9</div><div class="t" style="position:absolute;right:41.5px;top:549.69px;line-height:15px;font-size:11px;white-space:nowrap;font-weight:bold;color:#008000;transform:scaleX(1.3);transform-origin:right center;">$400.00</div><div style="position:absolute;left:17px;top:565px;width:1047px;height:16px;background:#fff"></div><div style="position:absolute;left:17px;top:566px;width:13px;height:13px;background:#fff;border:1px solid #333;"></div><svg style="position:absolute;left:17px;top:566px" width="13" height="13" viewBox="0 0 13 13"><path d="M2 6.5 L5 9.5 L10.5 3.5" fill="none" stroke="#333" stroke-width="1.15"/></svg><div class="t" style="position:absolute;right:973px;top:565.69px;line-height:15px;font-size:11px;white-space:nowrap;color:#008000;"><span style="letter-spacing:1.2px;">409862</span>4</div><div class="t" style="position:absolute;left:135px;top:565.69px;line-height:15px;font-size:11px;white-space:nowrap;color:#008000;"><span style="letter-spacing:1.2px;">11</span><span style="letter-spacing:1.15px;">/</span><span style="letter-spacing:0.32px;">JUN</span><span style="letter-spacing:1.15px;">/</span><span style="letter-spacing:1.2px;">20</span><span style="letter-spacing:1.1px;"> </span><span style="letter-spacing:1.2px;">21</span><span style="letter-spacing:1.15px;">:</span><span style="letter-spacing:1.2px;">42</span><span style="letter-spacing:1.15px;">:</span><span style="letter-spacing:1.2px;">0</span>8</div><div class="t" style="position:absolute;left:277px;top:565.69px;line-height:15px;font-size:11px;white-space:nowrap;color:#008000;"><span style="letter-spacing:0.32px;">MAGN</span>A</div><div class="t" style="position:absolute;left:378px;top:565.69px;line-height:15px;font-size:11px;white-space:nowrap;color:#008000;"><span style="letter-spacing:0.32px;">XXXX</span><span style="letter-spacing:1.15px;">-</span><span style="letter-spacing:1.2px;">282</span>8</div><div class="t" style="position:absolute;left:464px;top:565.69px;line-height:15px;font-size:11px;white-space:nowrap;color:#008000;"><span style="letter-spacing:0.32px;">CARLOS</span><span style="letter-spacing:1.1px;"> </span><span style="letter-spacing:0.32px;">ZAMORA</span><span style="letter-spacing:1.1px;"> </span><span style="letter-spacing:1.15px;">(</span><span style="letter-spacing:0.32px;">SPD</span><span style="letter-spacing:1.2px;">8541</span>)</div><div class="t" style="position:absolute;right:221px;top:565.69px;line-height:15px;font-size:11px;white-space:nowrap;color:#008000;"><span style="letter-spacing:1.2px;">5</span><span style="letter-spacing:1.15px;">.</span><span style="letter-spacing:1.2px;">78</span>4</div><div class="t" style="position:absolute;right:159px;top:565.69px;line-height:15px;font-size:11px;white-space:nowrap;color:#008000;"><span style="letter-spacing:1.15px;">$</span><span style="letter-spacing:1.2px;">17</span><span style="letter-spacing:1.15px;">.</span><span style="letter-spacing:1.2px;">2</span>9</div><div class="t" style="position:absolute;right:41.5px;top:565.69px;line-height:15px;font-size:11px;white-space:nowrap;font-weight:bold;color:#008000;transform:scaleX(1.3);transform-origin:right center;">$100.00</div><div style="position:absolute;left:17px;top:581px;width:1047px;height:16px;background:#f9eec0"></div><div style="position:absolute;left:17px;top:582px;width:13px;height:13px;background:#fff;border:1px solid #333;"></div><svg style="position:absolute;left:17px;top:582px" width="13" height="13" viewBox="0 0 13 13"><path d="M2 6.5 L5 9.5 L10.5 3.5" fill="none" stroke="#333" stroke-width="1.15"/></svg><div class="t" style="position:absolute;right:973px;top:581.69px;line-height:15px;font-size:11px;white-space:nowrap;color:#ff0000;"><span style="letter-spacing:1.2px;">409861</span>9</div><div class="t" style="position:absolute;left:135px;top:581.69px;line-height:15px;font-size:11px;white-space:nowrap;color:#ff0000;"><span style="letter-spacing:1.2px;">11</span><span style="letter-spacing:1.15px;">/</span><span style="letter-spacing:0.32px;">JUN</span><span style="letter-spacing:1.15px;">/</span><span style="letter-spacing:1.2px;">20</span><span style="letter-spacing:1.1px;"> </span><span style="letter-spacing:1.2px;">21</span><span style="letter-spacing:1.15px;">:</span><span style="letter-spacing:1.2px;">39</span><span style="letter-spacing:1.15px;">:</span><span style="letter-spacing:1.2px;">3</span>0</div><div class="t" style="position:absolute;left:277px;top:581.69px;line-height:15px;font-size:11px;white-space:nowrap;color:#ff0000;"><span style="letter-spacing:0.32px;">PREMIU</span>M</div><div class="t" style="position:absolute;left:378px;top:581.69px;line-height:15px;font-size:11px;white-space:nowrap;color:#ff0000;"><span style="letter-spacing:0.32px;">XXXX</span><span style="letter-spacing:1.15px;">-</span><span style="letter-spacing:1.2px;">282</span>8</div><div class="t" style="position:absolute;left:464px;top:581.69px;line-height:15px;font-size:11px;white-space:nowrap;color:#ff0000;"><span style="letter-spacing:0.32px;">CARLOS</span><span style="letter-spacing:1.1px;"> </span><span style="letter-spacing:0.32px;">ZAMORA</span><span style="letter-spacing:1.1px;"> </span><span style="letter-spacing:1.15px;">(</span><span style="letter-spacing:0.32px;">SPD</span><span style="letter-spacing:1.2px;">8541</span>)</div><div class="t" style="position:absolute;right:221px;top:581.69px;line-height:15px;font-size:11px;white-space:nowrap;color:#ff0000;"><span style="letter-spacing:1.2px;">7</span><span style="letter-spacing:1.15px;">.</span><span style="letter-spacing:1.2px;">89</span>9</div><div class="t" style="position:absolute;right:159px;top:581.69px;line-height:15px;font-size:11px;white-space:nowrap;color:#ff0000;"><span style="letter-spacing:1.15px;">$</span><span style="letter-spacing:1.2px;">18</span><span style="letter-spacing:1.15px;">.</span><span style="letter-spacing:1.2px;">9</span>9</div><div class="t" style="position:absolute;right:41.5px;top:581.69px;line-height:15px;font-size:11px;white-space:nowrap;font-weight:bold;color:#ff0000;transform:scaleX(1.3);transform-origin:right center;">$150.00</div><div style="position:absolute;left:17px;top:597px;width:1047px;height:16px;background:#fff"></div><div style="position:absolute;left:17px;top:598px;width:13px;height:13px;background:#fff;border:1px solid #333;"></div><svg style="position:absolute;left:17px;top:598px" width="13" height="13" viewBox="0 0 13 13"><path d="M2 6.5 L5 9.5 L10.5 3.5" fill="none" stroke="#333" stroke-width="1.15"/></svg><div class="t" style="position:absolute;right:973px;top:597.69px;line-height:15px;font-size:11px;white-space:nowrap;color:#008000;"><span style="letter-spacing:1.2px;">409861</span>2</div><div class="t" style="position:absolute;left:135px;top:597.69px;line-height:15px;font-size:11px;white-space:nowrap;color:#008000;"><span style="letter-spacing:1.2px;">11</span><span style="letter-spacing:1.15px;">/</span><span style="letter-spacing:0.32px;">JUN</span><span style="letter-spacing:1.15px;">/</span><span style="letter-spacing:1.2px;">20</span><span style="letter-spacing:1.1px;"> </span><span style="letter-spacing:1.2px;">21</span><span style="letter-spacing:1.15px;">:</span><span style="letter-spacing:1.2px;">29</span><span style="letter-spacing:1.15px;">:</span><span style="letter-spacing:1.2px;">3</span>0</div><div class="t" style="position:absolute;left:277px;top:597.69px;line-height:15px;font-size:11px;white-space:nowrap;color:#008000;"><span style="letter-spacing:0.32px;">MAGN</span>A</div><div class="t" style="position:absolute;left:378px;top:597.69px;line-height:15px;font-size:11px;white-space:nowrap;color:#008000;"><span style="letter-spacing:0.32px;">XXXX</span><span style="letter-spacing:1.15px;">-</span><span style="letter-spacing:1.2px;">292</span>9</div><div class="t" style="position:absolute;left:464px;top:597.69px;line-height:15px;font-size:11px;white-space:nowrap;color:#008000;"><span style="letter-spacing:0.32px;">JUAN</span><span style="letter-spacing:1.1px;"> </span><span style="letter-spacing:0.32px;">GONZÁLEZ</span><span style="letter-spacing:1.1px;"> </span><span style="letter-spacing:1.15px;">(</span><span style="letter-spacing:0.32px;">SRX</span><span style="letter-spacing:1.2px;">7451</span>)</div><div class="t" style="position:absolute;right:221px;top:597.69px;line-height:15px;font-size:11px;white-space:nowrap;color:#008000;"><span style="letter-spacing:1.2px;">6</span><span style="letter-spacing:1.15px;">.</span><span style="letter-spacing:1.2px;">00</span>0</div><div class="t" style="position:absolute;right:159px;top:597.69px;line-height:15px;font-size:11px;white-space:nowrap;color:#008000;"><span style="letter-spacing:1.15px;">$</span><span style="letter-spacing:1.2px;">17</span><span style="letter-spacing:1.15px;">.</span><span style="letter-spacing:1.2px;">2</span>9</div><div class="t" style="position:absolute;right:41.5px;top:597.69px;line-height:15px;font-size:11px;white-space:nowrap;font-weight:bold;color:#008000;transform:scaleX(1.3);transform-origin:right center;">$103.74</div><div style="position:absolute;left:17px;top:613px;width:1047px;height:16px;background:#f9eec0"></div><div style="position:absolute;left:17px;top:614px;width:13px;height:13px;background:#fff;border:1px solid #333;"></div><svg style="position:absolute;left:17px;top:614px" width="13" height="13" viewBox="0 0 13 13"><path d="M2 6.5 L5 9.5 L10.5 3.5" fill="none" stroke="#333" stroke-width="1.15"/></svg><div class="t" style="position:absolute;right:973px;top:613.69px;line-height:15px;font-size:11px;white-space:nowrap;color:#008000;"><span style="letter-spacing:1.2px;">409844</span>0</div><div class="t" style="position:absolute;left:135px;top:613.69px;line-height:15px;font-size:11px;white-space:nowrap;color:#008000;"><span style="letter-spacing:1.2px;">11</span><span style="letter-spacing:1.15px;">/</span><span style="letter-spacing:0.32px;">JUN</span><span style="letter-spacing:1.15px;">/</span><span style="letter-spacing:1.2px;">20</span><span style="letter-spacing:1.1px;"> </span><span style="letter-spacing:1.2px;">18</span><span style="letter-spacing:1.15px;">:</span><span style="letter-spacing:1.2px;">33</span><span style="letter-spacing:1.15px;">:</span><span style="letter-spacing:1.2px;">0</span>0</div><div class="t" style="position:absolute;left:277px;top:613.69px;line-height:15px;font-size:11px;white-space:nowrap;color:#008000;"><span style="letter-spacing:0.32px;">MAGN</span>A</div><div class="t" style="position:absolute;left:378px;top:613.69px;line-height:15px;font-size:11px;white-space:nowrap;color:#008000;"><span style="letter-spacing:0.32px;">XXXX</span><span style="letter-spacing:1.15px;">-</span><span style="letter-spacing:1.2px;">282</span>8</div><div class="t" style="position:absolute;left:464px;top:613.69px;line-height:15px;font-size:11px;white-space:nowrap;color:#008000;"><span style="letter-spacing:0.32px;">CARLOS</span><span style="letter-spacing:1.1px;"> </span><span style="letter-spacing:0.32px;">ZAMORA</span><span style="letter-spacing:1.1px;"> </span><span style="letter-spacing:1.15px;">(</span><span style="letter-spacing:0.32px;">SPD</span><span style="letter-spacing:1.2px;">8541</span>)</div><div class="t" style="position:absolute;right:221px;top:613.69px;line-height:15px;font-size:11px;white-space:nowrap;color:#008000;"><span style="letter-spacing:1.2px;">5</span><span style="letter-spacing:1.15px;">.</span><span style="letter-spacing:1.2px;">78</span>4</div><div class="t" style="position:absolute;right:159px;top:613.69px;line-height:15px;font-size:11px;white-space:nowrap;color:#008000;"><span style="letter-spacing:1.15px;">$</span><span style="letter-spacing:1.2px;">17</span><span style="letter-spacing:1.15px;">.</span><span style="letter-spacing:1.2px;">2</span>9</div><div class="t" style="position:absolute;right:41.5px;top:613.69px;line-height:15px;font-size:11px;white-space:nowrap;font-weight:bold;color:#008000;transform:scaleX(1.3);transform-origin:right center;">$100.00</div><div style="position:absolute;left:47px;top:500px;width:1px;height:146px;background:#000"></div><div style="position:absolute;left:131px;top:500px;width:1px;height:146px;background:#000"></div><div style="position:absolute;left:273px;top:500px;width:1px;height:146px;background:#000"></div><div style="position:absolute;left:374px;top:500px;width:1px;height:146px;background:#000"></div><div style="position:absolute;left:460px;top:500px;width:1px;height:146px;background:#000"></div><div style="position:absolute;left:801px;top:500px;width:1px;height:146px;background:#000"></div><div style="position:absolute;left:883px;top:500px;width:1px;height:146px;background:#000"></div><div style="position:absolute;left:945px;top:500px;width:1px;height:146px;background:#000"></div><div style="position:absolute;left:1063px;top:500px;width:1px;height:146px;background:#000"></div><div style="position:absolute;left:17px;top:647px;width:1049px;height:15px;background:#f0f0f0"></div><div style="position:absolute;left:18px;top:646px;width:4px;height:16px;background:#000"></div><svg style="position:absolute;left:25px;top:650px" width="10" height="9" viewBox="0 0 10 9"><path d="M7 1.5 L3.5 4.5 L7 7.5" fill="none" stroke="#585858" stroke-width="2.1"/></svg><svg style="position:absolute;left:1053px;top:650px" width="10" height="9" viewBox="0 0 10 9"><path d="M3 1.5 L6.5 4.5 L3 7.5" fill="none" stroke="#585858" stroke-width="2.1"/></svg><div style="position:absolute;left:1066px;top:485px;width:16px;height:162px;background:#f0f0f0"></div><svg style="position:absolute;left:1069px;top:490px" width="10" height="9" viewBox="0 0 10 9"><path d="M1.5 6.5 L4.5 3 L7.5 6.5" fill="none" stroke="#585858" stroke-width="2.1"/></svg><svg style="position:absolute;left:1069px;top:634px" width="10" height="9" viewBox="0 0 10 9"><path d="M1.5 2.5 L4.5 6 L7.5 2.5" fill="none" stroke="#585858" stroke-width="2.1"/></svg><div style="position:absolute;left:833px;top:413px;width:82px;height:58px;background:#e1e1e1;border:2px solid #0a78d7;"></div><div style="position:absolute;left:836px;top:416px;width:76px;height:52px;border:1px dotted #000;"></div><div style="position:absolute;left:917px;top:413px;width:82px;height:58px;background:#e1e1e1;border:1px solid #adadad;"></div><div style="position:absolute;left:1001px;top:413px;width:82px;height:58px;background:#e1e1e1;border:1px solid #adadad;"></div><svg style="position:absolute;left:861px;top:418px" width="32" height="34" viewBox="0 0 32 34">
<rect x="0.5" y="0.5" width="26" height="31" fill="#fffaf0" stroke="#000" stroke-width="1"/>
<g shape-rendering="crispEdges" fill="#000"><rect x="2" y="21" width="1" height="9"/><rect x="4" y="21" width="1" height="9"/><rect x="6" y="21" width="2" height="9"/><rect x="9" y="21" width="1" height="9"/><rect x="11" y="21" width="1" height="9"/></g>
<circle cx="21.5" cy="24.1" r="7.8" fill="#fffaf0" stroke="#000" stroke-width="1"/><g shape-rendering="crispEdges" fill="#5aa03c"><rect x="20" y="19" width="3" height="11"/><rect x="16" y="23" width="11" height="3"/></g></svg><svg style="position:absolute;left:945px;top:418px" width="32" height="34" viewBox="0 0 32 34">
<rect x="0.5" y="0.5" width="26" height="31" fill="#fffaf0" stroke="#000" stroke-width="1"/>
<g shape-rendering="crispEdges" fill="#000"><rect x="2" y="21" width="1" height="9"/><rect x="4" y="21" width="1" height="9"/><rect x="6" y="21" width="2" height="9"/><rect x="9" y="21" width="1" height="9"/><rect x="11" y="21" width="1" height="9"/></g>
<circle cx="21.5" cy="24.1" r="7.8" fill="#fffaf0" stroke="#000" stroke-width="1"/><path d="M17.5 20 L25.5 28.5 M25.5 20 L17.5 28.5" stroke="#ff0000" stroke-width="2"/></svg><svg style="position:absolute;left:1027px;top:419px" width="29" height="29" viewBox="0 0 29 29">
<circle cx="14.5" cy="14.5" r="13" fill="#ff0000" stroke="#000" stroke-width="1"/>
<path d="M7.5 7.5 L21.5 21.5 M21.5 7.5 L7.5 21.5" stroke="#000" stroke-width="6.5"/>
<path d="M7.5 7.5 L21.5 21.5 M21.5 7.5 L7.5 21.5" stroke="#fffaf0" stroke-width="4.5"/>
</svg><div class="t" style="position:absolute;left:674px;width:400px;text-align:center;top:453.69px;line-height:15px;font-size:11px;white-space:nowrap;"><span style="letter-spacing:0.32px;text-decoration:underline;">I</span><span style="letter-spacing:0.95px;">ngresa</span>r</div><div class="t" style="position:absolute;left:758px;width:400px;text-align:center;top:453.69px;line-height:15px;font-size:11px;white-space:nowrap;"><span style="letter-spacing:0.32px;text-decoration:underline;">E</span><span style="letter-spacing:0.95px;">limina</span>r</div><div class="t" style="position:absolute;left:842px;width:400px;text-align:center;top:453.69px;line-height:15px;font-size:11px;white-space:nowrap;"><span style="letter-spacing:0.32px;">C</span><span style="letter-spacing:0.95px;">e</span><span style="letter-spacing:0.95px;text-decoration:underline;">r</span><span style="letter-spacing:0.95px;">ra</span>r</div><div style="position:absolute;left:701px;top:228px;width:73px;height:63px;background:rgba(0,0,0,0.42);filter:blur(2px);"></div><svg style="position:absolute;left:0;top:0;filter:blur(1.5px)" width="1101" height="682"><polygon points="664,260 698,262 698,266" fill="rgba(0,0,0,0.35)"/></svg><div style="position:absolute;left:697px;top:224px;width:73px;height:63px;background:#ffffe1;border:1px solid #000;"></div><svg style="position:absolute;left:0;top:0" width="1101" height="682"><polygon points="660.5,258.5 697.5,253 699,253 699,261.5 697.5,261.5" fill="#ffffe1"/><polyline points="697.5,253 660.5,258.5 697.5,261.5" fill="none" stroke="#000" stroke-width="1"/></svg><div class="t" style="position:absolute;left:533.5px;width:400px;text-align:center;top:239.69px;line-height:15px;font-size:11px;white-space:nowrap;color:#000;"><span style="letter-spacing:0.32px;">V</span><span style="letter-spacing:0.95px;">oucher</span>s</div><div class="t" style="position:absolute;left:533.5px;width:400px;text-align:center;top:252.69px;line-height:15px;font-size:11px;white-space:nowrap;color:#000;"><span style="letter-spacing:0.95px;">pendiente</span>s</div><div class="t" style="position:absolute;left:533.5px;width:400px;text-align:center;top:265.69px;line-height:15px;font-size:11px;white-space:nowrap;color:#000;"><span style="letter-spacing:0.95px;">de</span><span style="letter-spacing:1.1px;"> </span><span style="letter-spacing:0.95px;">factura</span>r</div><div style="position:absolute;left:707px;top:520px;width:73px;height:63px;background:rgba(0,0,0,0.42);filter:blur(2px);"></div><svg style="position:absolute;left:0;top:0;filter:blur(1.5px)" width="1101" height="682"><polygon points="670,552 704,554 704,558" fill="rgba(0,0,0,0.35)"/></svg><div style="position:absolute;left:703px;top:516px;width:73px;height:63px;background:#ffffe1;border:1px solid #000;"></div><svg style="position:absolute;left:0;top:0" width="1101" height="682"><polygon points="666.5,550.5 703.5,545.5 705,545.5 705,553.5 703.5,553.5" fill="#ffffe1"/><polyline points="703.5,545.5 666.5,550.5 703.5,553.5" fill="none" stroke="#000" stroke-width="1"/></svg><div class="t" style="position:absolute;left:539.5px;width:400px;text-align:center;top:531.69px;line-height:15px;font-size:11px;white-space:nowrap;color:#000;"><span style="letter-spacing:0.32px;">V</span><span style="letter-spacing:0.95px;">oucher</span>s</div><div class="t" style="position:absolute;left:539.5px;width:400px;text-align:center;top:544.69px;line-height:15px;font-size:11px;white-space:nowrap;color:#000;"><span style="letter-spacing:0.95px;">facturado</span>s</div><div style="position:absolute;left:272px;top:36px;width:112px;height:90px;background:rgba(0,0,0,0.42);filter:blur(2px);"></div><svg style="position:absolute;left:0;top:0;filter:blur(1.5px)" width="1101" height="682"><polygon points="249,27 269,46 269,52" fill="rgba(0,0,0,0.35)"/></svg><div style="position:absolute;left:268px;top:32px;width:112px;height:90px;background:#ffffe1;border:1px solid #000;"></div><svg style="position:absolute;left:0;top:0" width="1101" height="682"><polygon points="248.5,25.5 266,33 270,33 270,45 268.5,45" fill="#ffffe1"/><polyline points="269,32.5 266,32.5 248.5,25.5 268.5,45" fill="none" stroke="#000" stroke-width="1"/></svg><div class="t" style="position:absolute;left:124px;width:400px;text-align:center;top:48.69px;line-height:15px;font-size:11px;white-space:nowrap;color:#000;"><span style="letter-spacing:0.32px;">N</span><span style="letter-spacing:0.95px;">úmero</span><span style="letter-spacing:1.1px;"> </span><span style="letter-spacing:0.95px;">d</span>e</div><div class="t" style="position:absolute;left:124px;width:400px;text-align:center;top:61.69px;line-height:15px;font-size:11px;white-space:nowrap;color:#000;"><span style="letter-spacing:0.95px;">factura</span><span style="letter-spacing:1.1px;"> </span><span style="letter-spacing:0.95px;">generada</span>,</div><div class="t" style="position:absolute;left:124px;width:400px;text-align:center;top:74.69px;line-height:15px;font-size:11px;white-space:nowrap;color:#000;"><span style="letter-spacing:0.95px;">total</span><span style="letter-spacing:1.1px;"> </span><span style="letter-spacing:0.95px;">de</span><span style="letter-spacing:1.1px;"> </span><span style="letter-spacing:0.95px;">voucher</span>s</div><div class="t" style="position:absolute;left:124px;width:400px;text-align:center;top:87.69px;line-height:15px;font-size:11px;white-space:nowrap;color:#000;"><span style="letter-spacing:0.95px;">y</span><span style="letter-spacing:1.1px;"> </span><span style="letter-spacing:0.95px;">total</span><span style="letter-spacing:1.1px;"> </span><span style="letter-spacing:0.95px;">de</span><span style="letter-spacing:1.1px;"> </span><span style="letter-spacing:0.95px;">l</span>a</div><div class="t" style="position:absolute;left:124px;width:400px;text-align:center;top:100.69px;line-height:15px;font-size:11px;white-space:nowrap;color:#000;"><span style="letter-spacing:0.95px;">factura</span>.</div></body></html>
